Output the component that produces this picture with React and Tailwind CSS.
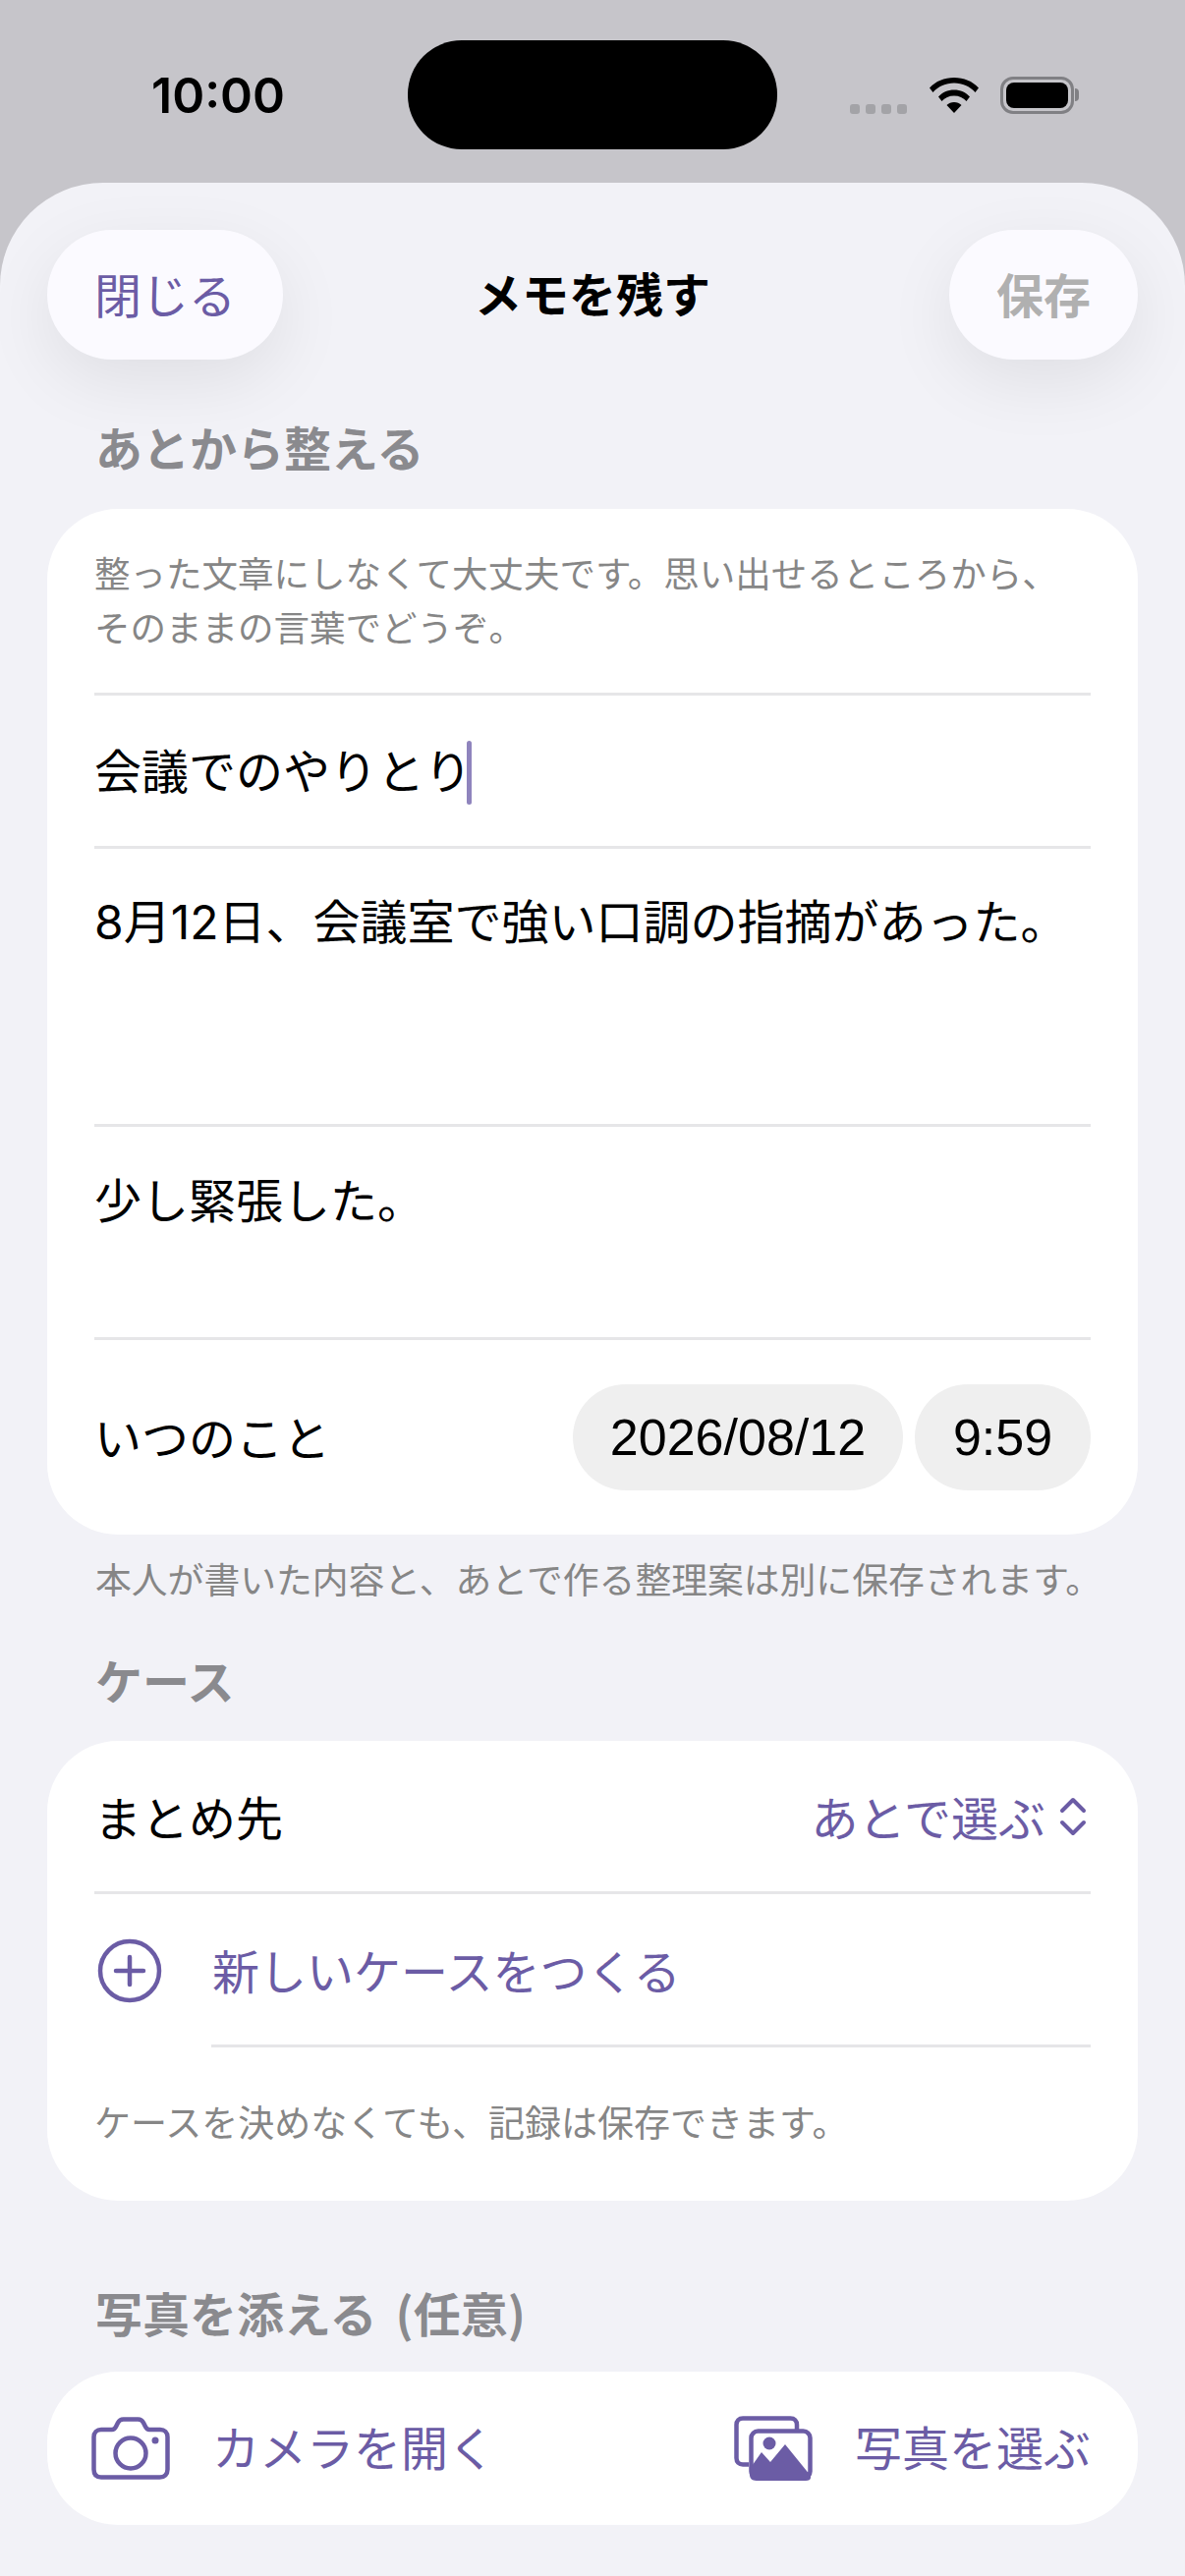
const PURPLE = "#6b5ca5";

function Wifi() {
  return (
    <svg width="50" height="37" viewBox="0 0 50 37" fill="#000">
      <path d="M0 11.500C6.500 4.500 15 1 25 1s18.500 3.500 25 10.500l-3.500 4.500C41 10 33.500 6.500 25 6.500S9 10 3.500 16z" />
      <path d="M9 20.500C13 16 18.500 13.500 25 13.500s12 2.500 16 7l-3.500 4.500C34.500 21.500 30 19.500 25 19.500S15.500 21.500 12.500 25z" />
      <path d="M17.500 29c2-2 4.500-3 7.500-3s5.500 1 7.500 3L25 37z" />
    </svg>
  );
}

function Battery() {
  return (
    <div className="flex items-center">
      <div className="w-[75px] h-[38px] rounded-[13px] border-[3px] border-[#808084] p-[3px]">
        <div className="w-full h-full rounded-[8px] bg-black" />
      </div>
      <div className="ml-[1px] w-[4px] h-[13px] rounded-r-full bg-[#808084]" />
    </div>
  );
}

function StatusBar() {
  return (
    <div className="h-[186px] pt-[41px] flex items-start bg-[#c6c5ca]">
      <div className="w-[415px] h-[111px] pl-[154px] flex items-center text-[50px] font-semibold text-black font-['Inter',sans-serif] leading-none">
        10:00
      </div>
      <div className="w-[376px] h-[111px] rounded-[55px] bg-black" />
      <div className="flex-1 h-[111px] flex items-center pl-[74px]">
        <div className="flex gap-[6px] mt-[28px]">
          <span className="w-[10px] h-[10px] rounded-[3px] bg-[#a3a3a7]" />
          <span className="w-[10px] h-[10px] rounded-[3px] bg-[#a3a3a7]" />
          <span className="w-[10px] h-[10px] rounded-[3px] bg-[#a3a3a7]" />
          <span className="w-[10px] h-[10px] rounded-[3px] bg-[#a3a3a7]" />
        </div>
        <div className="ml-[23px]"><Wifi /></div>
        <div className="ml-[22px]"><Battery /></div>
      </div>
    </div>
  );
}

function PlusCircle() {
  return (
    <svg width="66" height="66" viewBox="0 0 66 66" fill="none" stroke={PURPLE} strokeWidth="4.500" strokeLinecap="round">
      <circle cx="33" cy="33" r="30" />
      <path d="M33 19v28M19 33h28" />
    </svg>
  );
}

function UpDown() {
  return (
    <svg width="28" height="40" viewBox="0 0 28 40" fill="none" stroke={PURPLE} strokeWidth="4" strokeLinecap="round" strokeLinejoin="round">
      <path d="M3 14L14 3l11 11" />
      <path d="M3 26l11 11 11-11" />
    </svg>
  );
}

function Camera() {
  return (
    <svg width="80" height="64" viewBox="0 0 80 64" fill="none" stroke={PURPLE} strokeWidth="4.500" strokeLinejoin="round">
      <path d="M10 13h11c2 0 3-1 4-3l2-4c1-2 3-3.500 5.500-3.500h15c2.500 0 4.500 1.500 5.500 3.500l2 4c1 2 2 3 4 3h11c4.500 0 7.500 3 7.500 7.500v33c0 5-3 8-8 8H10c-5 0-7.500-3-7.500-8v-33C2.500 16 5.500 13 10 13z" />
      <circle cx="40" cy="37" r="15.500" />
      <circle cx="65" cy="24" r="3.500" fill={PURPLE} stroke="none" />
    </svg>
  );
}

function Photos() {
  return (
    <svg width="80" height="66" viewBox="0 0 80 66" fill="none">
      <path d="M64 15V9c0-4-2.500-6.500-6.500-6.500H9C5 2.500 2.500 5 2.500 9v34c0 4 2.500 6.500 6.500 6.500h6" stroke={PURPLE} strokeWidth="4.500" />
      <rect x="17.500" y="15.500" width="60" height="48" rx="7" fill="#fff" stroke={PURPLE} strokeWidth="4.500" />
      <path d="M16 54l12-17 9 10 15-18 26 32v2c0 2-2 3-5 3H23c-5 0-7-3-7-6z" fill={PURPLE} />
      <circle cx="36" cy="28" r="6.500" fill={PURPLE} />
    </svg>
  );
}

function Divider({ className = "" }) {
  return <div className={`h-[3px] bg-[#e6e6e8] ${className}`} />;
}

function SectionLabel({ children, className = "" }) {
  return <h2 className={`px-[97px] text-[48px] font-bold text-[#8a8a8e] leading-none ${className}`}>{children}</h2>;
}

function Header() {
  return (
    <div className="h-[180px] pt-[48px] px-[48px] flex items-start">
      <button className="w-[240px] h-[132px] pb-[4px] rounded-[66px] bg-[#fbfaff] shadow-[0_22px_70px_rgba(0,0,0,0.08)] text-[48px] text-[#6b5ca5] leading-none">
        閉じる
      </button>
      <h1 className="flex-1 h-[132px] pb-[6px] pr-[48px] flex items-center justify-center text-[48px] font-bold text-black">メモを残す</h1>
      <button className="w-[192px] h-[132px] pb-[4px] rounded-[66px] bg-[#fbfaff] shadow-[0_22px_70px_rgba(0,0,0,0.08)] text-[48px] font-semibold text-[#b0b0b0] leading-none">
        保存
      </button>
    </div>
  );
}

function EntryCard() {
  return (
    <section className="mx-[48px] mt-[40px] h-[1044px] rounded-[72px] bg-white px-[48px] flex flex-col">
      <p className="h-[187px] pt-[37px] text-[36.500px] leading-[55px] text-[#868686] whitespace-nowrap">
        整った文章にしなくて大丈夫です。思い出せるところから、<br />
        そのままの言葉でどうぞ。
      </p>
      <Divider />
      <div className="h-[153px] pb-[5px] flex items-center text-[48px] text-black">
        会議でのやりとり
        <span className="-ml-[5px] mt-[8px] w-[5px] h-[65px] rounded-full bg-[#8f84bd]" />
      </div>
      <Divider />
      <p className="h-[280px] pt-[39px] text-[48px] leading-[72px] text-black font-['Inter','Noto_Sans_CJK_JP',sans-serif]">8月12日、会議室で強い口調の指摘があった。</p>
      <Divider />
      <p className="h-[214px] pt-[36px] text-[48px] leading-[72px] text-black">少し緊張した。</p>
      <Divider />
      <div className="flex-1 flex items-center justify-between">
        <span className="pb-[4px] text-[48px] text-black">いつのこと</span>
        <div className="flex gap-[12px] font-['Liberation_Sans',sans-serif] text-[52px] text-black">
          <span className="w-[336px] h-[108px] rounded-[54px] bg-[#efefef] flex items-center justify-center">2026/08/12</span>
          <span className="w-[179px] h-[108px] rounded-[54px] bg-[#efefef] flex items-center justify-center">9:59</span>
        </div>
      </div>
    </section>
  );
}

function CaseCard() {
  return (
    <section className="mx-[48px] mt-[39px] h-[468px] rounded-[72px] bg-white pl-[48px] pr-[48px] flex flex-col">
      <div className="h-[153px] flex items-center justify-between">
        <span className="pb-[2px] text-[48px] text-black">まとめ先</span>
        <span className="flex items-center text-[#6b5ca5] text-[48px]">
          <span className="pb-[2px]">あとで選ぶ</span>
          <span className="ml-[14px] mr-[4px] flex"><UpDown /></span>
        </span>
      </div>
      <Divider />
      <div className="h-[153px] flex items-center">
        <div className="w-[120px] pl-[3px] mt-[2px] flex items-center"><PlusCircle /></div>
        <span className="pb-[2px] text-[48px] text-[#6b5ca5]">新しいケースをつくる</span>
      </div>
      <Divider className="ml-[119px]" />
      <p className="pt-[48px] text-[37px] leading-[55px] text-[#868686] whitespace-nowrap">ケースを決めなくても、記録は保存できます。</p>
    </section>
  );
}

function PhotoCard() {
  return (
    <section className="mx-[48px] mt-[37px] h-[156px] rounded-[72px] bg-white pl-[45px] pr-[48px] flex items-center justify-between">
      <div className="flex items-center">
        <Camera />
        <span className="ml-[43px] pb-[6px] text-[48px] text-[#6b5ca5]">カメラを開く</span>
      </div>
      <div className="flex items-center">
        <Photos />
        <span className="ml-[43px] pb-[6px] text-[48px] text-[#6b5ca5]">写真を選ぶ</span>
      </div>
    </section>
  );
}

export default function App() {
  return (
    <div className="w-[1206px] h-[2622px] overflow-hidden bg-[#c6c5ca] font-['Noto_Sans_CJK_JP',sans-serif]">
      <StatusBar />
      <main className="h-[2436px] overflow-hidden rounded-t-[105px] bg-[#f2f2f7]">
        <Header />
        <div className="pt-[64px]">
          <SectionLabel>あとから整える</SectionLabel>
          <EntryCard />
          <p className="mt-[22px] px-[97px] text-[36.800px] leading-[44px] text-[#868686] whitespace-nowrap">本人が書いた内容と、あとで作る整理案は別に保存されます。</p>
          <SectionLabel className="mt-[57px]">ケース</SectionLabel>
          <CaseCard />
          <SectionLabel className="mt-[89px]">
            写真を添える<span className="pl-[19px]">(任意)</span>
          </SectionLabel>
          <PhotoCard />
        </div>
      </main>
    </div>
  );
}
